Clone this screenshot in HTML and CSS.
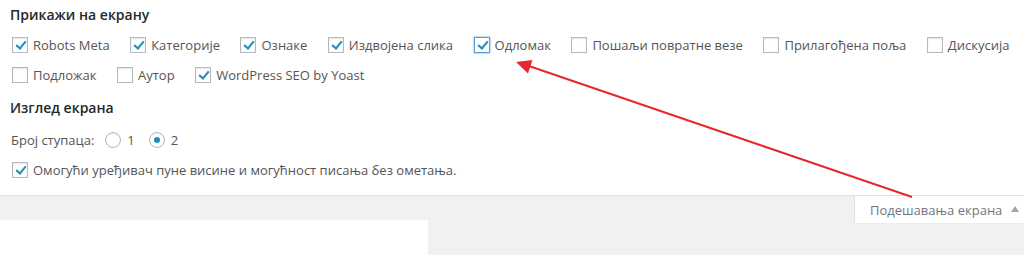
FILE: index.html
```html
<!DOCTYPE html>
<html lang="sr">
<head>
<meta charset="utf-8">
<title>Подешавања екрана</title>
<link rel="stylesheet" href="styles.css">
</head>
<body>
<div class="page">
  <div class="screen-meta">
    <h5 class="title">Прикажи на екрану</h5>
    <div class="prefs">
      <label class="opt"><span class="cb on"></span>Robots Meta</label>
      <label class="opt"><span class="cb on"></span>Категорије</label>
      <label class="opt"><span class="cb on"></span>Ознаке</label>
      <label class="opt"><span class="cb on"></span>Издвојена слика</label>
      <label class="opt"><span class="cb on focus"></span>Одломак</label>
      <label class="opt"><span class="cb"></span>Пошаљи повратне везе</label>
      <label class="opt"><span class="cb"></span>Прилагођена поља</label>
      <label class="opt"><span class="cb"></span>Дискусија</label>
      <label class="opt"><span class="cb"></span>Подложак</label>
      <label class="opt"><span class="cb"></span>Аутор</label>
      <label class="opt"><span class="cb on"></span>WordPress SEO by Yoast</label>
    </div>
    <h5 class="title second">Изглед екрана</h5>
    <div class="columns">
      <span class="col-label">Број ступаца:</span>
      <label class="radio-opt"><span class="rb"></span>1</label>
      <label class="radio-opt"><span class="rb on"></span>2</label>
    </div>
    <div class="editor-row">
      <label class="opt"><span class="cb on"></span>Омогући уређивач пуне висине и могућност писања без ометања.</label>
    </div>
  </div>
  <div class="band">
    <div class="tab-row">
      <div class="tab">Подешавања екрана<span class="tri"></span></div>
    </div>
    <div class="panel"></div>
  </div>
  <svg class="arrow" width="1024" height="255" viewBox="0 0 1024 255">
    <line x1="912" y1="197" x2="526" y2="65" stroke="#e8262d" stroke-width="2"/>
    <polygon points="516,62 532.5,60 528,73.5" fill="#e8262d"/>
  </svg>
</div>
</body>
</html>
```

FILE: styles.css
```css
html, body {
  margin: 0;
  padding: 0;
  background: #f1f1f1;
}
body {
  font-family: "Open Sans", "Noto Sans", sans-serif;
  font-size: 13px;
  color: #555;
}
.page {
  position: relative;
  width: 1024px;
  height: 255px;
  overflow: hidden;
}
.screen-meta {
  background: #fff;
  padding: 5px 10px 10px 10px;
  border-bottom: 1px solid #e2e2e2;
  box-shadow: 0 1px 1px rgba(0,0,0,0.04);
}
.title {
  margin: 0;
  font-size: 14px;
  line-height: 20px;
  font-weight: 600;
  color: #23282d;
}
.title.second {
  margin-top: 8px;
}
.prefs {
  margin-top: 5px;
  display: flex;
  flex-wrap: wrap;
  column-gap: 18.5px;
  width: 1010px;
}
.opt {
  display: flex;
  align-items: center;
  height: 30px;
  line-height: 30px;
  white-space: nowrap;
  margin-left: 2px;
}
.cb {
  position: relative;
  box-sizing: border-box;
  width: 16px;
  height: 16px;
  border: 1px solid #b4b9be;
  background: #fff;
  box-shadow: inset 0 1px 2px rgba(0,0,0,0.1);
  margin-right: 5px;
  flex: none;
}
.cb.focus {
  border-color: #5b9dd9;
  box-shadow: 0 0 2px rgba(30,140,190,0.8);
}
.cb.on::after {
  content: "";
  position: absolute;
  left: 5px;
  top: 1px;
  width: 4px;
  height: 8px;
  border: solid #1e8cbe;
  border-width: 0 2.5px 2.5px 0;
  transform: rotate(40deg);
}
.columns {
  display: flex;
  align-items: center;
  height: 30px;
  margin-top: 7px;
}
.col-label {
  margin-left: 1px;
  margin-right: 11px;
}
.radio-opt {
  display: flex;
  align-items: center;
  margin-right: 14px;
}
.rb {
  position: relative;
  box-sizing: border-box;
  width: 16px;
  height: 16px;
  border-radius: 50%;
  border: 1px solid #b4b9be;
  background: #fff;
  box-shadow: inset 0 1px 2px rgba(0,0,0,0.1);
  margin-right: 6px;
}
.rb.on::after {
  content: "";
  position: absolute;
  left: 4px;
  top: 4px;
  width: 6px;
  height: 6px;
  border-radius: 50%;
  background: #1e8cbe;
}
.band {
  background: #f1f1f1;
}
.tab-row {
  display: flex;
  justify-content: flex-end;
  height: 24px;
}
.tab {
  box-sizing: border-box;
  width: 170px;
  height: 27px;
  background: #fff;
  border-left: 1px solid #e2e2e2;
  box-shadow: 0 1px 1px -1px rgba(0,0,0,0.1);
  padding-left: 15px;
  display: flex;
  align-items: center;
  color: #72777c;
}
.tri {
  width: 0;
  height: 0;
  border-left: 4px solid transparent;
  border-right: 4px solid transparent;
  border-bottom: 6px solid #a0a5aa;
  margin-left: 9px;
  margin-top: -2px;
}
.panel {
  width: 428px;
  height: 35px;
  background: #fff;
}
.arrow {
  position: absolute;
  left: 0;
  top: 0;
  pointer-events: none;
}
```
